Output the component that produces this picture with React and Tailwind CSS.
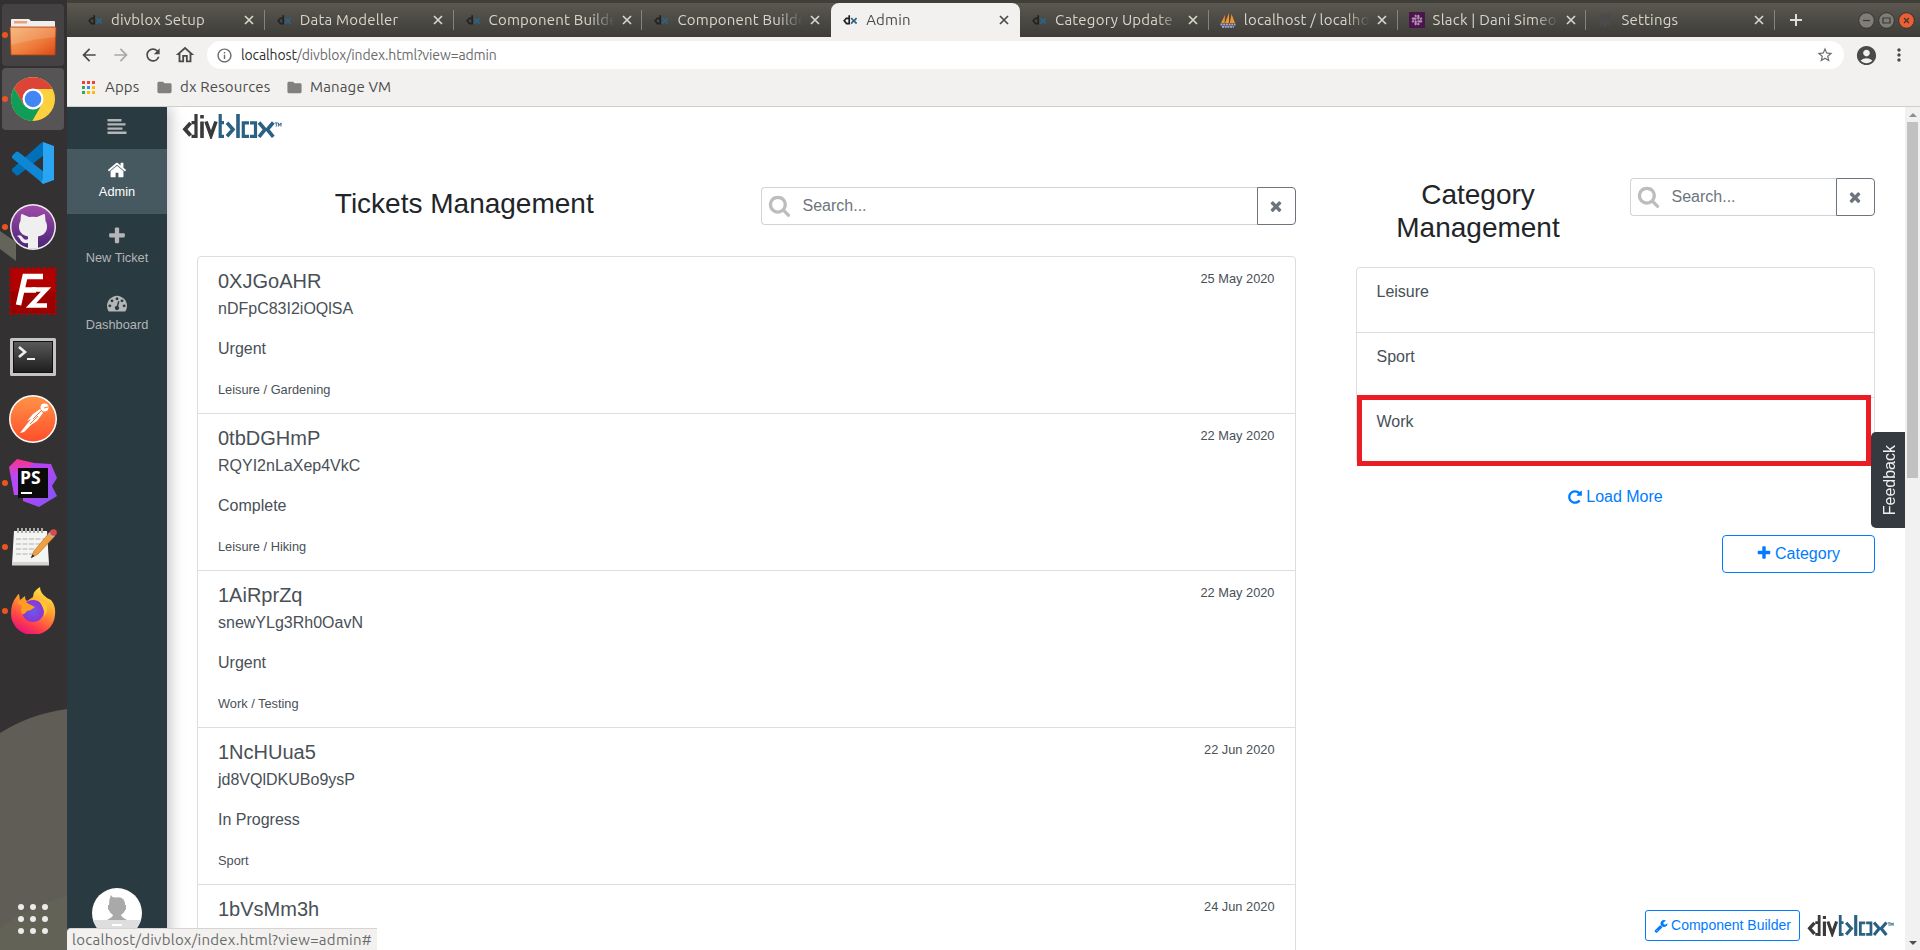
import React from "react";
import { FaSlack } from "react-icons/fa";
import { MdArrowBack, MdArrowForward, MdRefresh, MdOutlineHome, MdInfoOutline, MdStarBorder, MdAccountCircle, MdMoreVert, MdFolder } from "react-icons/md";

const FA = {
  home: "M1472 992v480q0 26-19 45t-45 19h-384v-384h-256v384h-384q-26 0-45-19t-19-45v-480q0-1 .5-3t.5-3l575-474 575 474q1 2 1 6zm223-69l-62 74q-8 9-21 11h-3q-13 0-21-7l-692-577-692 577q-12 8-24 7-13-2-21-11l-62-74q-8-10-7-23.5t11-21.5l719-599q32-26 76-26t76 26l244 204v-195q0-14 9-23t23-9h192q14 0 23 9t9 23v408l219 182q10 8 11 21.5t-7 23.5z",
  plus: "M1600 736v192q0 40-28 68t-68 28h-416v416q0 40-28 68t-68 28h-192q-40 0-68-28t-28-68v-416h-416q-40 0-68-28t-28-68v-192q0-40 28-68t68-28h416v-416q0-40 28-68t68-28h192q40 0 68 28t28 68v416h416q40 0 68 28t28 68z",
  times: "M1490 1322q0 40-28 68l-136 136q-28 28-68 28t-68-28l-294-294-294 294q-28 28-68 28t-68-28l-136-136q-28-28-28-68t28-68l294-294-294-294q-28-28-28-68t28-68l136-136q28-28 68-28t68 28l294 294 294-294q28-28 68-28t68 28l136 136q28 28 28 68t-28 68l-294 294 294 294q28 28 28 68z",
  search: "M1216 832q0-185-131.5-316.5t-316.5-131.5-316.5 131.5-131.5 316.5 131.5 316.5 316.5 131.5 316.5-131.5 131.5-316.5zm512 832q0 52-38 90t-90 38q-54 0-90-38l-343-342q-179 124-399 124-143 0-273.5-55.5t-225-150-150-225-55.5-273.5 55.5-273.5 150-225 225-150 273.5-55.5 273.5 55.5 225 150 150 225 55.5 273.5q0 220-124 399l343 343q37 37 37 90z",
  wrench: "M448 1472q0-26-19-45t-45-19-45 19-19 45 19 45 45 19 45-19 19-45zm644-420l-682 682q-37 37-90 37-52 0-91-37l-106-108q-38-36-38-90 0-53 38-91l681-681q39 98 114.5 173.5t173.5 114.5zm634-435q0 39-23 106-47 134-164.5 217.5t-258.5 83.5q-185 0-316.5-131.5t-131.5-316.5 131.5-316.5 316.5-131.5q58 0 121.5 16.5t107.5 46.5q16 11 16 28t-16 28l-293 169v224l193 107q5-3 79-48.5t135.5-81 70.5-35.5q15 0 23.5 10t8.5 25z",
  repeat: "M1664 256v448q0 26-19 45t-45 19h-448q-42 0-59-40-17-39 14-69l138-138q-148-137-349-137-104 0-198.5 40.5t-163.5 109.5-109.5 163.5-40.5 198.5 40.5 198.5 109.5 163.5 163.5 109.5 198.5 40.5q119 0 225-52t179-147q7-10 23-12 15 0 25 9l137 138q9 8 9.5 20.5t-7.5 22.5q-109 132-264 204.5t-327 72.5q-156 0-298-61t-245-164-164-245-61-298 61-298 164-245 245-164 298-61q147 0 284.5 55.5t244.5 156.5l130-129q29-31 70-14 39 17 39 59z",
  gauge: "M384 1152q0-53-37.5-90.5t-90.5-37.5-90.5 37.5-37.5 90.5 37.5 90.5 90.5 37.5 90.5-37.5 37.5-90.5zm192-448q0-53-37.5-90.5t-90.5-37.5-90.5 37.5-37.5 90.5 37.5 90.5 90.5 37.5 90.5-37.5 37.5-90.5zm428 481l101-382q6-26-7.5-48.5t-38.5-29.5-48 6.5-30 39.5l-101 382q-60 5-107 43.5t-63 98.5q-20 77 20 146t117 89 146-20 89-117q16-60-6-117t-72-91zm660-33q0-53-37.5-90.5t-90.5-37.5-90.5 37.5-37.5 90.5 37.5 90.5 90.5 37.5 90.5-37.5 37.5-90.5zm-640-640q0-53-37.5-90.5t-90.5-37.5-90.5 37.5-37.5 90.5 37.5 90.5 90.5 37.5 90.5-37.5 37.5-90.5zm448 192q0-53-37.5-90.5t-90.5-37.5-90.5 37.5-37.5 90.5 37.5 90.5 90.5 37.5 90.5-37.5 37.5-90.5zm320 448q0 261-141 483-19 29-54 29h-1402q-35 0-54-29-141-221-141-483 0-182 71-348t191-286 286-191 348-71 348 71 286 191 191 286 71 348z",
};

function Fa({ name, className }) {
  return (
    <svg viewBox="0 0 1792 1792" className={`shrink-0 fill-current ${className}`}>
      <path d={FA[name]} />
    </svg>
  );
}

function Logo({ className }) {
  return (
    <svg viewBox="0 0 100 26" className={className} fill="none" strokeWidth="3.6">
      <g stroke="#3a3a3a">
        <path d="M8.6 10L3 16.200L8.6 22.600" strokeWidth="3.800" />
        <path d="M14 1V25M9.500 9.700H14M9.500 23.300H14" strokeWidth="3.200" />
        <path d="M20 8.500V25M20 2V5.500M24 8.500L29 22.500L34 8.500" />
      </g>
      <g stroke="#2a6183">
        <path d="M38.200 1V25M42 9.700H38.200M42 23.300H38.200" strokeWidth="3.200" />
        <path d="M45 9.800L51 16.500L45 23.300" />
        <path d="M56 1V25" />
        <path d="M67 9.900H61.300V23.300H67M68 9.900H73.500V23.300H68" strokeWidth="3.200" />
        <path d="M77 9.500L83 16.500L77 23.800M91.300 9.500L85.300 16.500L91.300 23.800" />
      </g>
      <g stroke="#2a6183" strokeWidth="0.9">
        <path d="M92.800 9.900H95.800M94.300 9.900V13.600M96.400 13.600V9.900L97.700 12.400L99 9.900V13.600" />
      </g>
    </svg>
  );
}

function DxIcon() {
  return (
    <svg viewBox="0 0 14 12" className="h-3 w-3.5" fill="none" strokeWidth="1.7">
      <path d="M3.6 4L1.2 6.8L3.6 9.6H6.2V1.2M3 4.4H6.2" stroke="#222" />
      <path d="M8.2 4L10.6 6.8L8.2 9.6M13.6 4L11 6.8L13.6 9.6" stroke="#2b6488" />
    </svg>
  );
}

function Sails() {
  return (
    <svg viewBox="0 0 16 16" className="size-4">
      <path d="M1 11L5 3L4.6 11ZM5 11L9 1V11ZM9.8 11L11.5 2L15 11Z" fill="#f0932b" />
      <path d="M.5 12.5H15.5M2 14.8H14" stroke="#a9a9d6" strokeWidth="1.8" strokeDasharray="2 .7" />
    </svg>
  );
}

function SlackIcon() {
  return (
    <span className="flex size-4 items-center justify-center bg-[#4a154b]">
      <FaSlack className="size-3 text-[#b88fb9]" />
    </span>
  );
}

function Gear() {
  return (
    <svg viewBox="0 0 16 16" className="size-4">
      <circle cx="8" cy="8" r="5" fill="#4a4b4a" />
      <path d="M8 1V15M1 8H15M3 3L13 13M13 3L3 13" stroke="#4a4b4a" strokeWidth="2.6" />
    </svg>
  );
}

function Cross() {
  return (
    <svg viewBox="0 0 10 10" className="size-2.5 shrink-0" stroke="currentColor" strokeWidth="1.7">
      <path d="M1 1L9 9M9 1L1 9" />
    </svg>
  );
}

const TABS = [
  ["divblox Setup", DxIcon],
  ["Data Modeller", DxIcon],
  ["Component Builder", DxIcon],
  ["Component Builder", DxIcon],
  ["Admin", DxIcon, true],
  ["Category Update", DxIcon],
  ["localhost / localho", Sails],
  ["Slack | Dani Simeor", SlackIcon],
  ["Settings", Gear],
];

const UI = "font-['Ubuntu','Noto_Sans',sans-serif]";

function TabStrip() {
  return (
    <div className="flex h-[37px] shrink-0 border-t-[3px] border-[#403f3a] bg-linear-to-b from-[#5b5850] to-[#3d3c38] pl-[9px]">
      {TABS.map(([label, Icon, active], i) => (
        <div key={i} className={`flex h-[34px] w-[188.800px] shrink-0 items-center pl-[11px] ${active ? "rounded-t-lg bg-[#f2f1ef] text-[#4b4b4b]" : "text-[#d9d5ca]"}`}>
          <span className="flex w-4 justify-center"><Icon /></span>
          <span className="ml-2 w-[128px] shrink-0 overflow-hidden whitespace-nowrap text-[15px] leading-5 tracking-[0.200px] mask-r-from-80% mask-r-to-98%">
            {label}
          </span>
          <span className="ml-[5px]"><Cross /></span>
          {!active && i !== 3 && <span className="ml-auto h-5 w-px bg-[#85837c]" />}
        </div>
      ))}
      <div className="flex flex-1 items-center justify-between pl-[15px] pr-[5px]">
        <svg viewBox="0 0 12 12" className="size-3" stroke="#e0ddd4" strokeWidth="2"><path d="M6 0V12M0 6H12" /></svg>
        <div className="flex gap-[3px]">
          {["M5 8.5H12", "M5 6H12V11H5Z", "M6 6L11 11M11 6L6 11"].map((d, i) => (
            <svg key={i} viewBox="0 0 17 17" className="size-[17px]" fill="none">
              <circle cx="8.5" cy="8.5" r="7.8" fill={i === 2 ? "#ec5f34" : "#7f7d76"} stroke="#35342f" />
              <path d={d} stroke="#3a3833" strokeWidth="1.2" />
            </svg>
          ))}
        </div>
      </div>
    </div>
  );
}

function Toolbar() {
  return (
    <div className="flex h-9 shrink-0 items-center bg-[#f2f1ef] pl-3 pr-3 text-[#4a4a4a]">
      <MdArrowBack className="size-5" />
      <MdArrowForward className="ml-3 size-5 text-[#a9a8a7]" />
      <MdRefresh className="ml-3 size-5" />
      <MdOutlineHome className="ml-[11px] size-[22px]" />
      <div className="ml-[11px] flex h-7 w-[1637px] items-center rounded-full bg-white pl-[9px] pr-2.5 text-[#6b6b6b]">
        <MdInfoOutline className="size-[17px]" />
        <span className="ml-2 flex-1 text-[14px] tracking-[-0.130px]">
          <span className="text-[#2e2e2e]">localhost</span>/divblox/index.html?view=admin
        </span>
        <MdStarBorder className="size-[18px]" />
      </div>
      <MdAccountCircle className="ml-[11px] size-[23px]" />
      <MdMoreVert className="ml-auto -mr-px size-5" />
    </div>
  );
}

const APP_DOTS = ["#ea4335", "#ea4335", "#ea4335", "#34a853", "#4285f4", "#fbbc05", "#34a853", "#fbbc05", "#fbbc05"];

function Bookmarks() {
  return (
    <div className="flex h-[34px] shrink-0 items-center border-b border-[#cfcecc] bg-[#f2f1ef] pb-1 pl-[15px] text-[15px] tracking-[0.150px] text-[#4b4b4b]">
      <div className="grid grid-cols-3 gap-0.5">
        {APP_DOTS.map((c, i) => <span key={i} className="size-[3px]" style={{ background: c }} />)}
      </div>
      <span className="ml-2.5 w-[35px] whitespace-nowrap">Apps</span>
      <MdFolder className="ml-4 size-[17px] text-[#808080]" />
      <span className="ml-[7px] w-[91px] whitespace-nowrap">dx Resources</span>
      <MdFolder className="ml-[15px] size-[17px] text-[#808080]" />
      <span className="ml-[7px] whitespace-nowrap">Manage VM</span>
    </div>
  );
}

function FolderIcon() {
  return (
    <svg viewBox="0 0 48 48" className="size-12">
      <defs><linearGradient id="fold" x1="0" y1="0" x2="1" y2="1"><stop offset="0" stopColor="#f5b06c" /><stop offset=".6" stopColor="#ee7a3a" /><stop offset="1" stopColor="#dd4814" /></linearGradient></defs>
      <path d="M2 9Q2 8 3 8H20L22 10H45Q46 10 46 11V24H2Z" fill="#eee" />
      <rect x="5" y="10" width="13" height="2.5" fill="#f0a070" />
      <path d="M1 16H47L46 44H2Z" fill="url(#fold)" stroke="#b5400f" strokeWidth=".8" />
      <path d="M1.5 17H46.5V26Q24 28 2 34Z" fill="#fff" opacity=".14" />
    </svg>
  );
}
function ChromeIcon() {
  return (
    <svg viewBox="0 0 48 48" className="size-12">
      <circle cx="24" cy="24" r="22" fill="#fdd03e" />
      <path d="M24 24L14.5 29.5L5 13A22 22 0 0 1 43.500 14H24Z" fill="#dc4437" />
      <path d="M5 13L14.5 29.5L24 34L33 29L23.3 46A22 22 0 0 1 5 13Z" fill="#109d58" />
      <circle cx="24" cy="24" r="10.5" fill="#fff" />
      <circle cx="24" cy="24" r="8.3" fill="#4285f4" />
    </svg>
  );
}
function CodeIcon() {
  return (
    <svg viewBox="0 0 48 48" className="size-12">
      <path d="M3 32L7 36Q8 37 9.500 36L35 16V3L32 4L3 30Z" fill="#0070b8" />
      <path d="M3 17L7 13Q8 12 9.500 13L35 33V45L32 43L3 19Z" fill="#1087d2" />
      <path d="M34 3L45 7V41L34 45L32 43L34 40Z" fill="#2ba5f3" />
    </svg>
  );
}
function GithubIcon() {
  return (
    <svg viewBox="0 0 48 48" className="size-12">
      <defs><linearGradient id="gh" x1="0" y1="0" x2="0" y2="1"><stop offset="0" stopColor="#a04aa8" /><stop offset="1" stopColor="#4a2478" /></linearGradient></defs>
      <circle cx="24" cy="24" r="23" fill="#eee" />
      <circle cx="24" cy="24" r="21.500" fill="url(#gh)" />
      <path d="M12 12Q12 11 13 11L20 14Q24 13.300 28 14L35 11Q36 11 36 12L36.500 18Q39 22 37.500 27Q36 32 29 33.500V45Q24 46.500 19 45V40Q13 41 11 36Q10 34 8 33Q12 31 14 35Q16 38 19 36V33.500Q12 32 10.500 27Q9 22 11.500 18Z" fill="#efefef" />
    </svg>
  );
}
function ZillaIcon() {
  return (
    <svg viewBox="0 0 48 48" className="size-12">
      <rect x="2" y="2" width="44" height="44" fill="#b30000" />
      <rect x="2" y="2" width="44" height="44" fill="none" stroke="#b30000" strokeWidth="4" strokeDasharray="0.100 5.400" strokeLinecap="round" />
      <path d="M2 24H46V46H2Z" fill="#8f0000" opacity=".6" />
      <path d="M9.500 38L16 9.500H34M13 23H27" stroke="#fff" strokeWidth="5.500" fill="none" />
      <path d="M23 22.500H37L22 38.500H38" stroke="#fff" strokeWidth="4.500" fill="none" />
    </svg>
  );
}
function TerminalIcon() {
  return (
    <svg viewBox="0 0 48 48" className="mt-1 size-12">
      <defs><linearGradient id="term" x1="0" y1="0" x2="0" y2="1"><stop offset="0" stopColor="#5a5a5a" /><stop offset="1" stopColor="#1d1d1d" /></linearGradient></defs>
      <rect x="1" y="5" width="46" height="38" rx="1.500" fill="#c4c4c4" />
      <rect x="4.500" y="8.500" width="39" height="31" fill="url(#term)" stroke="#111" />
      <path d="M10 14L16 19L10 24" stroke="#eee" strokeWidth="2.600" fill="none" />
      <path d="M18 26H26" stroke="#eee" strokeWidth="2" />
    </svg>
  );
}
function PostmanIcon() {
  return (
    <svg viewBox="0 0 48 48" className="size-12">
      <defs><linearGradient id="pm" x1="0" y1="0" x2="0" y2="1"><stop offset="0" stopColor="#ff9248" /><stop offset="1" stopColor="#ff4f2b" /></linearGradient></defs>
      <circle cx="24" cy="24" r="24" fill="#fff" />
      <circle cx="24" cy="24" r="22.500" fill="url(#pm)" />
      <circle cx="35.500" cy="12.500" r="4" fill="#fff" />
      <path d="M31 14L34 18L28 26L22 30L15 37L11 38L14 34L22 24L18 26L24 19Z" fill="#fff" />
      <path d="M24 24L33 15M21 29L29 21" stroke="#ff6f3c" strokeWidth="1" />
      <path d="M35 13L39 12" stroke="#ff7a40" strokeWidth="1" />
    </svg>
  );
}
function StormIcon() {
  return (
    <svg viewBox="0 0 48 48" className="size-12">
      <defs>
        <linearGradient id="ps1" x1="0" y1="0" x2="0" y2="1"><stop offset="0" stopColor="#ff318c" /><stop offset=".5" stopColor="#b74af7" /></linearGradient>
        <linearGradient id="ps2" x1="0" y1="0" x2="1" y2="1"><stop offset="0" stopColor="#b345f1" /><stop offset=".4" stopColor="#b345f1" /><stop offset="1" stopColor="#765af8" /></linearGradient>
      </defs>
      <path d="M0 8L8 0L25 4V20L12 36H5Z" fill="url(#ps1)" />
      <path d="M25 4L42 5L48 19L43 27L48 37L30 48L14 42V14Z" fill="url(#ps2)" />
      <rect x="9" y="9" width="30" height="30" fill="#0b0b0b" />
      <text x="11" y="25" fill="#fff" fontSize="17.500" fontWeight="700" fontFamily="Open Sans, sans-serif">PS</text>
      <rect x="12" y="33" width="11" height="2" fill="#fff" />
    </svg>
  );
}
function NotesIcon() {
  return (
    <svg viewBox="0 0 48 48" className="size-12">
      <path d="M5 8H38L40 41H3Z" fill="#f4f4f2" />
      <path d="M3 39H40V42.500H3Z" fill="#d5d5cf" />
      <path d="M9 5V10M13 5V10M17 5V10M21 5V10M25 5V10M29 5V10M33 5V10" stroke="#aaa" strokeWidth="2" />
      <path d="M7 16H35M7 21H33M7 26H26M7 31H24" stroke="#b0b0b0" strokeWidth="1" strokeDasharray="5 1.500" />
      <path d="M22 35L25 28L41 9L46 13L29 31Z" fill="#f0a040" stroke="#b06a18" strokeWidth=".6" />
      <path d="M22 35L23.500 31.500L25.500 33Z" fill="#222" />
      <path d="M39 11L42 8L46 12L43.500 15Z" fill="#b5b5b5" />
      <circle cx="44.500" cy="9.500" r="3.300" fill="#dd4848" />
    </svg>
  );
}
function FirefoxIcon() {
  return (
    <svg viewBox="0 0 48 48" className="mb-[3px] size-12">
      <defs>
        <linearGradient id="fx" x1=".8" y1="0" x2=".3" y2="1"><stop offset="0" stopColor="#fff14a" /><stop offset=".4" stopColor="#ffa02e" /><stop offset=".75" stopColor="#ff4048" /><stop offset="1" stopColor="#e5107e" /></linearGradient>
        <radialGradient id="fx2"><stop offset="0" stopColor="#6a5be8" /><stop offset="1" stopColor="#8a35d6" /></radialGradient>
      </defs>
      <path d="M24 11Q24 5 31 1Q31 7 38 12L42 14Q47 20 46 29A22 21 0 0 1 2 27Q2 17 8 10Q9 8 10 8L11 14L16 10Q16 14 18 15Z" fill="url(#fx)" />
      <circle cx="24" cy="25" r="11" fill="url(#fx2)" />
      <path d="M8 16Q14 13 20 18L26 21Q23 24 18 25Q16 29 13 28Q11 25 13 20Z" fill="#ff9d1f" />
      <path d="M25 12Q31 14 34 22Q36 26 35 30Q40 26 37 17Z" fill="#ffc52f" />
    </svg>
  );
}

const DOCK = [
  [FolderIcon, true, "bg-[#454244]"],
  [ChromeIcon, true, "bg-[#565455]"],
  [CodeIcon, false, ""],
  [GithubIcon, true, ""],
  [ZillaIcon, false, ""],
  [TerminalIcon, false, ""],
  [PostmanIcon, false, ""],
  [StormIcon, true, ""],
  [NotesIcon, true, ""],
  [FirefoxIcon, true, ""],
];

function Dock() {
  return (
    <div className="relative flex w-[67px] shrink-0 flex-col justify-between overflow-hidden bg-[#333132]">
      <svg viewBox="0 0 67 950" className="absolute inset-0 h-[950px] w-[67px]">
        <path d="M0 231L16 242V261L0 249Z" fill="#64645a" />
        <path d="M0 733Q30 714 67 709V950H0Z" fill="#5f5d55" />
        <path d="M0 928Q30 906 67 896V950H0Z" fill="#636256" />
      </svg>
      <div className="relative flex flex-col gap-0.5 pt-1">
        {DOCK.map(([Icon, running, bg], i) => (
          <div key={i} className={`relative ml-0.5 flex h-[62px] w-[62px] items-center justify-center rounded ${bg}`}>
            {running && <span className="absolute left-0 size-[6px] rounded-full bg-[#ea5420]" />}
            <Icon />
          </div>
        ))}
      </div>
      <div className="relative mb-4 ml-[18px] grid w-[30px] grid-cols-3 gap-1.5">
        {Array.from({ length: 9 }, (_, i) => <span key={i} className="size-[6px] rounded-full bg-[#ecebe9]" />)}
      </div>
    </div>
  );
}

function SideNav() {
  return (
    <div className="relative z-10 flex w-[100px] shrink-0 flex-col items-center bg-[#293a41] text-[12.800px] text-[#b3b5b6] shadow-[3px_0_14px_rgba(0,0,0,0.25)]">
      <div className="flex h-[42px] w-full justify-center pt-3">
        <svg viewBox="0 0 20 15" className="h-[15px] w-5" stroke="currentColor" strokeWidth="2.400">
          <path d="M0.500 1.200H14.500M0.500 5.400H18.500M0.500 9.600H15.500M0.500 13.800H19.500" />
        </svg>
      </div>
      <div className="flex h-[65px] w-full flex-col items-center bg-[#475960] pt-[11px] text-white">
        <Fa name="home" className="size-5" />
        <span className="mt-0.5 leading-5">Admin</span>
      </div>
      <div className="flex h-[67px] w-full flex-col items-center pt-3">
        <Fa name="plus" className="size-5" />
        <span className="mt-[2px] leading-5">New Ticket</span>
      </div>
      <div className="flex w-full flex-col items-center pt-3">
        <Fa name="gauge" className="size-5" />
        <span className="mt-[2px] leading-5">Dashboard</span>
      </div>
      <svg viewBox="0 0 50 50" className="mb-3 mt-auto size-[50px]">
        <defs><clipPath id="av"><circle cx="25" cy="25" r="25" /></clipPath></defs>
        <g clipPath="url(#av)">
          <rect width="50" height="50" fill="#fff" />
          <rect y="32" width="50" height="18" fill="#dedede" />
          <path d="M19 7Q20 10 24 9.500Q33 8 33 17H34V21Q32 25 29 27Q29 29 35 32H15Q21 29 21 27Q18 25 16 21V17H17Q17 11 19 7Z" fill="#a9a9a9" />
          <path d="M20 37H30M16 41H33" stroke="#fff" strokeWidth="2" />
        </g>
      </svg>
    </div>
  );
}

function SearchBox({ className }) {
  return (
    <div className={`flex h-[38px] ${className}`}>
      <div className="flex flex-1 items-center rounded-l border border-r-0 border-[#ced4da] pl-[6px] text-base text-[#6c757d]">
        <Fa name="search" className="mb-0.5 size-[23px] text-[#bdbdbd]" />
        <span className="ml-3">Search...</span>
      </div>
      <div className="flex w-[39px] items-center justify-center rounded-r border border-[#6c757d] text-[#6c757d]">
        <Fa name="times" className="mb-px size-4" />
      </div>
    </div>
  );
}

const TICKETS = [
  ["0XJGoAHR", "nDFpC83I2iOQlSA", "Urgent", "Leisure / Gardening", "25 May 2020"],
  ["0tbDGHmP", "RQYI2nLaXep4VkC", "Complete", "Leisure / Hiking", "22 May 2020"],
  ["1AiRprZq", "snewYLg3Rh0OavN", "Urgent", "Work / Testing", "22 May 2020"],
  ["1NcHUua5", "jd8VQlDKUBo9ysP", "In Progress", "Sport", "22 Jun 2020"],
  ["1bVsMm3h", "", "", "", "24 Jun 2020"],
];

function Tickets() {
  return (
    <section className="w-[1098.500px] shrink-0">
      <div className="flex h-[149px] pt-20">
        <h2 className="flex-1 pr-[29px] text-center text-[28px] leading-[33.600px] text-[#212529]">Tickets Management</h2>
        <SearchBox className="w-[535px]" />
      </div>
      <div className="rounded-t border border-[#dcdddf] text-[#495057]">
        {TICKETS.map(([title, desc, status, cat, date]) => (
          <div key={title} className="h-[157px] border-b border-[#dcdddf] px-5 pt-3">
            <div className="flex justify-between">
              <h5 className="mb-1 text-[20px] leading-6">{title}</h5>
              <span className="text-[12.800px] leading-[19.200px]">{date}</span>
            </div>
            <p className="mb-4 min-h-6 text-base">{desc}</p>
            <p className="mb-[17px] min-h-6 text-base">{status}</p>
            <p className="text-[12.800px] leading-6">{cat}</p>
          </div>
        ))}
      </div>
    </section>
  );
}

function Categories() {
  return (
    <section className="ml-[60px] flex w-[519px] shrink-0 flex-col pt-[71px]">
      <div className="flex h-[89px] justify-between">
        <h2 className="w-[245px] text-center text-[28px] leading-[33px] text-[#212529]">Category<br />Management</h2>
        <SearchBox className="w-[245px]" />
      </div>
      <div className="relative rounded border border-[#dcdddf] text-base text-[#495057]">
        {["Leisure", "Sport", "Work"].map((c, i) => (
          <div key={c} className={`h-[65px] px-5 pt-3 ${i < 2 ? "border-b border-[#dcdddf]" : ""}`}>{c}</div>
        ))}
        <div className="absolute -bottom-[3px] left-0 h-[71px] w-[514px] border-[5px] border-[#ec1c24]" />
      </div>
      <div className="mt-[21px] flex items-center justify-center gap-[3px] text-base text-[#007bff]">
        <Fa name="repeat" className="size-4" />
        Load More
      </div>
      <div className="mt-[26px] flex h-[38px] w-[153px] items-center justify-center gap-[3px] self-end rounded border border-[#007bff] text-base text-[#007bff]">
        <Fa name="plus" className="mb-0.5 size-4" />
        Category
      </div>
    </section>
  );
}

export default function App() {
  return (
    <div className="flex h-[950px] w-[1920px] overflow-hidden bg-white font-['Liberation_Sans',Arial,sans-serif]">
      <Dock />
      <div className="flex min-w-0 flex-1 flex-col">
        <div className={`flex flex-col ${UI}`}>
          <TabStrip />
          <Toolbar />
          <Bookmarks />
        </div>
        <div className="relative flex h-[843px] overflow-hidden">
          <SideNav />
          <div className="flex h-[843px] flex-1 overflow-hidden pl-[30px]">
            <Logo className="-ml-[15px] -mr-[85px] mt-[6px] h-[26px] w-[100px] shrink-0" />
            <Tickets />
            <Categories />
          </div>
          <div className="flex w-[15px] shrink-0 flex-col items-center justify-between bg-[#f1f1f1] py-1.5">
            <div className="flex flex-col items-center">
              <span className="border-x-4 border-b-4 border-x-transparent border-b-[#8f8f8f]" />
              <span className="mt-[5px] h-[356px] w-[11px] bg-[#c1c1c1]" />
            </div>
            <span className="mb-[-1px] border-x-4 border-t-4 border-x-transparent border-t-[#505050]" />
          </div>
          <div className="absolute right-[15px] top-[325px] flex h-24 w-[34px] items-center justify-center rounded-l-[5px] bg-[#343a40] text-base text-[#f0f0f0]">
            <span className="rotate-180 pr-[3px] [writing-mode:vertical-rl]">Feedback</span>
          </div>
          <div className="absolute bottom-[9px] right-[26px] flex items-center gap-[7px]">
            <div className="flex h-[31px] w-[155px] items-center justify-center gap-[3px] rounded-[3px] border border-[#007bff] bg-white text-[14px] text-[#007bff]">
              <Fa name="wrench" className="size-3.5" />
              Component Builder
            </div>
            <Logo className="h-[23px] w-[87px]" />
          </div>
          <div className={`absolute bottom-0 left-0 z-20 h-[22px] w-[310px] rounded-tl border-t border-[#d5d4d2] bg-[#f2f1ef] pl-[5px] text-[15px] leading-[21px] tracking-[0.270px] text-[#6b6b6b] ${UI}`}>
            localhost/divblox/index.html?view=admin#
          </div>
        </div>
      </div>
    </div>
  );
}
